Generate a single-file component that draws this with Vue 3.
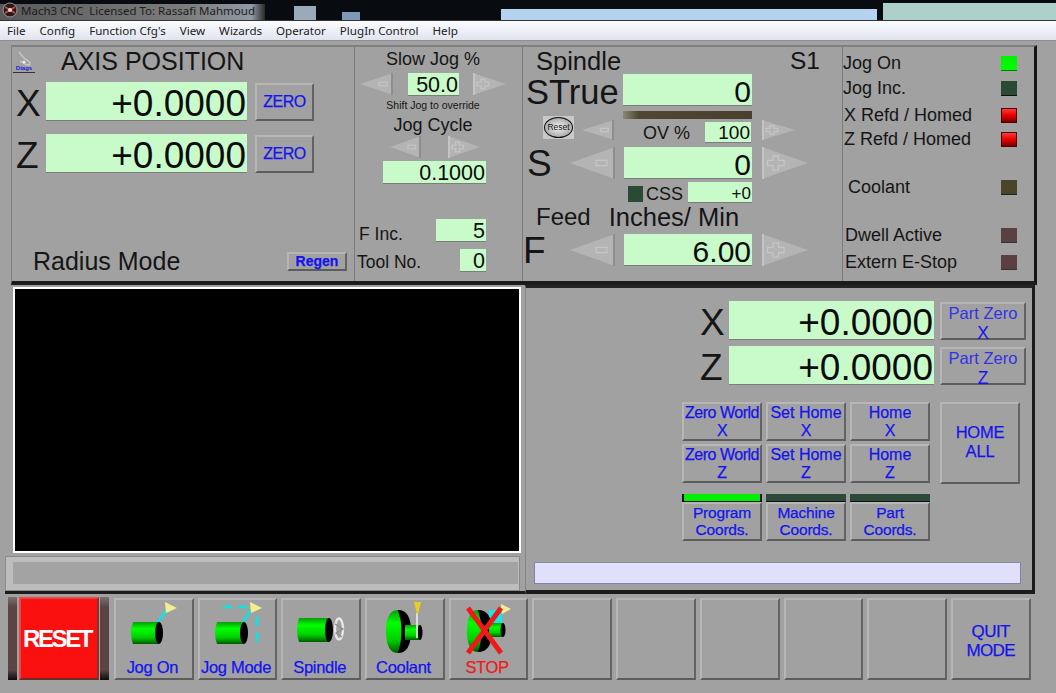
<template>
  <div class="screen">
    <div class="titlebar">
      <svg class="app-icon" width="16" height="16" viewBox="0 0 16 16">
        <circle cx="8" cy="8" r="7" fill="#2a1a1a" stroke="#999" stroke-width="1" />
        <path d="M3 5 L13 11 M3 11 L13 5" stroke="#c44" stroke-width="2" />
        <circle cx="8" cy="8" r="2" fill="#ddd" />
      </svg>
      <span>Mach3 CNC&nbsp; Licensed To: Rassafi Mahmoud</span>
    </div>
    <div class="menubar">
      <span v-for="m in menus" :key="m">{{ m }}</span>
    </div>

    <div class="top">
      <section class="axis">
        <div class="axis-head">
          <svg class="diag" width="22" height="23" viewBox="0 0 22 23">
            <path d="M6 2 C9 6 11 9 14 10 C17 12 18 14 16 15 C12 15 10 13 7 11" fill="none" stroke="#c9c9c9" stroke-width="1.4" />
            <circle cx="11" cy="12" r="1.5" fill="#eee" />
            <text x="11" y="20" text-anchor="middle" font-size="6" font-weight="bold" fill="#1a1ae0">Diags</text>
            <path d="M0 22.5 H22" stroke="#333" />
          </svg>
          <h1>AXIS POSITION</h1>
        </div>
        <div class="axis-row">
          <span class="big-label">X</span>
          <div class="dro dro-big axis-dro">+0.0000</div>
          <button class="btn zero">ZERO</button>
        </div>
        <div class="axis-row second">
          <span class="big-label">Z</span>
          <div class="dro dro-big axis-dro">+0.0000</div>
          <button class="btn zero">ZERO</button>
        </div>
        <div class="axis-foot">
          <span class="radius">Radius Mode</span>
          <button class="btn regen">Regen</button>
        </div>
      </section>

      <section class="jog">
        <div class="jog-title first">Slow Jog %</div>
        <div class="jog-row">
          <Arrow dir="left" :w="33" :h="22" />
          <div class="dro dro-mid slow-dro">50.0</div>
          <Arrow dir="right" :w="33" :h="22" />
        </div>
        <div class="shift">Shift Jog to override</div>
        <div class="jog-title">Jog Cycle</div>
        <div class="jog-row cycle-arrows">
          <Arrow dir="left" :w="31" :h="22" />
          <Arrow dir="right" :w="32" :h="22" />
        </div>
        <div class="dro dro-mid cycle-dro">0.1000</div>
        <div class="small-row finc">
          <span>F Inc.</span>
          <div class="dro dro-mid finc-dro">5</div>
        </div>
        <div class="small-row tool">
          <span>Tool No.</span>
          <div class="dro dro-mid tool-dro">0</div>
        </div>
      </section>

      <section class="spindle">
        <div class="spin-head">
          <span>Spindle</span>
          <span class="s1">S1</span>
        </div>
        <div class="spin-true">
          <span class="strue">STrue</span>
          <div class="dro dro-spin">0</div>
        </div>
        <div class="ov-bar"></div>
        <div class="ov-row">
          <div class="reset-round"><span>Reset</span></div>
          <Arrow dir="left" :w="32" :h="20" />
          <span class="ov-label">OV %</span>
          <div class="dro ov-dro">100</div>
          <Arrow dir="right" :w="33" :h="20" />
        </div>
        <div class="spin-row s-row">
          <span class="big-label spin-label">S</span>
          <Arrow dir="left" :w="45" :h="32" />
          <div class="dro dro-spin">0</div>
          <Arrow dir="right" :w="46" :h="32" />
        </div>
        <div class="css-row">
          <i class="led css-led"></i>
          <span class="css-label">CSS</span>
          <div class="dro css-dro">+0</div>
        </div>
        <div class="feed-head">
          <span>Feed</span>
          <span class="units">Inches/ Min</span>
        </div>
        <div class="spin-row">
          <span class="big-label spin-label f-label">F</span>
          <Arrow dir="left" :w="45" :h="32" />
          <div class="dro dro-spin">6.00</div>
          <Arrow dir="right" :w="46" :h="32" />
        </div>
      </section>

      <section class="leds">
        <div v-for="l in leds" :key="l.label" class="led-row" :style="{ marginTop: l.top + 'px' }">
          <span :style="{ paddingLeft: l.pad + 'px' }">{{ l.label }}</span>
          <i class="led" :class="l.color"></i>
        </div>
      </section>
    </div>

    <div class="middle">
      <div class="left-col">
        <div class="toolpath"></div>
        <div class="status"><div class="status-inner"></div></div>
      </div>
      <div class="right-panel">
        <div class="pos-row">
          <span class="big-label pos-label">X</span>
          <div class="dro dro-big pos-dro">+0.0000</div>
          <button class="btn part">Part Zero<b>X</b></button>
        </div>
        <div class="pos-row pos-second">
          <span class="big-label pos-label">Z</span>
          <div class="dro dro-big pos-dro">+0.0000</div>
          <button class="btn part">Part Zero<b>Z</b></button>
        </div>
        <div class="home-block">
          <div class="home-grid">
            <button v-for="b in homeButtons" :key="b" class="btn home-btn" :class="{ tight: b.startsWith('Zero') }">{{ b }}</button>
          </div>
          <button class="btn home-all">HOME<br>ALL</button>
        </div>
        <div class="coords">
          <div v-for="c in coords" :key="c.label" class="coord">
            <div class="coord-led" :class="{ on: c.on }"></div>
            <button class="btn home-btn coord-btn">{{ c.label }}</button>
          </div>
        </div>
        <div class="msg"></div>
      </div>
    </div>

    <div class="bottom">
      <div class="reset-group">
        <i class="reset-side"></i>
        <button class="reset-btn">RESET</button>
        <i class="reset-side narrow"></i>
      </div>
      <button class="btn tool-btn">
        <svg width="76" height="56" viewBox="0 0 76 56">
          <defs>
            <linearGradient id="g1" x1="0" y1="0" x2="0" y2="1">
              <stop offset="0" stop-color="#0a9a0a" /><stop offset="0.3" stop-color="#00ff00" />
              <stop offset="0.7" stop-color="#00d000" /><stop offset="1" stop-color="#005a00" />
            </linearGradient>
          </defs>
          <path d="M44 22 L54 8" stroke="#19dede" stroke-width="3" />
          <path d="M51 2 L63 8 L52 13 Z" fill="#f4ee90" />
          <path d="M19 22 H45 V44 H19 Q15 33 19 22 Z" fill="url(#g1)" />
          <ellipse cx="45" cy="33" rx="4" ry="11" fill="#000" />
        </svg>
        <span>Jog On</span>
      </button>
      <button class="btn tool-btn">
        <svg width="76" height="56" viewBox="0 0 76 56">
          <defs>
            <linearGradient id="g2" x1="0" y1="0" x2="0" y2="1">
              <stop offset="0" stop-color="#0a9a0a" /><stop offset="0.3" stop-color="#00ff00" />
              <stop offset="0.7" stop-color="#00d000" /><stop offset="1" stop-color="#005a00" />
            </linearGradient>
          </defs>
          <path d="M45 22 L53 10" stroke="#19dede" stroke-width="3" />
          <path d="M25 7 H52" stroke="#19dede" stroke-width="3" stroke-dasharray="9 6" />
          <path d="M59 16 V43" stroke="#19dede" stroke-width="3" stroke-dasharray="10 6" />
          <path d="M52 2 L64 8 L53 13 Z" fill="#f4ee90" />
          <path d="M19 22 H46 V44 H19 Q15 33 19 22 Z" fill="url(#g2)" />
          <ellipse cx="46" cy="33" rx="4" ry="11" fill="#000" />
        </svg>
        <span>Jog Mode</span>
      </button>
      <button class="btn tool-btn">
        <svg width="76" height="56" viewBox="0 0 76 56">
          <defs>
            <linearGradient id="g3" x1="0" y1="0" x2="0" y2="1">
              <stop offset="0" stop-color="#0a9a0a" /><stop offset="0.3" stop-color="#00ff00" />
              <stop offset="0.7" stop-color="#00d000" /><stop offset="1" stop-color="#005a00" />
            </linearGradient>
          </defs>
          <path d="M17 18 H47 V42 H17 Q13 30 17 18 Z" fill="url(#g3)" />
          <ellipse cx="47" cy="30" rx="4" ry="12" fill="#000" />
          <ellipse cx="57" cy="29" rx="4" ry="10.5" fill="none" stroke="#e6e6e6" stroke-width="2.4" />
          <path d="M53 24 L61 29 L54 33 L60 37" fill="none" stroke="#8a8a8a" stroke-width="1.2" />
        </svg>
        <span>Spindle</span>
      </button>
      <button class="btn tool-btn">
        <svg width="76" height="56" viewBox="0 0 76 56">
          <defs>
            <linearGradient id="g4" x1="0" y1="0" x2="0" y2="1">
              <stop offset="0" stop-color="#0a9a0a" /><stop offset="0.3" stop-color="#00ff00" />
              <stop offset="0.7" stop-color="#00d000" /><stop offset="1" stop-color="#005a00" />
            </linearGradient>
          </defs>
          <path d="M33 10 Q46 10 46 31 Q46 53 33 53 Z" fill="#000" />
          <path d="M21 31 Q21 10 33 10 Q40 31 33 53 Q21 53 21 31 Z" fill="url(#g4)" />
          <path d="M40 25 H55 V40 H40 Z" fill="url(#g4)" />
          <ellipse cx="55" cy="32.5" rx="2.5" ry="7.5" fill="#000" />
          <path d="M52 13 V38" stroke="#eee" stroke-width="1.6" />
          <path d="M49 2 H56 L53 14 H52 Z" fill="#e8d020" />
        </svg>
        <span>Coolant</span>
      </button>
      <button class="btn tool-btn stop">
        <svg width="76" height="56" viewBox="0 0 76 56">
          <defs>
            <linearGradient id="g5" x1="0" y1="0" x2="0" y2="1">
              <stop offset="0" stop-color="#0a9a0a" /><stop offset="0.3" stop-color="#00ff00" />
              <stop offset="0.7" stop-color="#00d000" /><stop offset="1" stop-color="#005a00" />
            </linearGradient>
          </defs>
          <path d="M40 10 H53 V24 H40 Z" fill="#19e6e6" />
          <path d="M29 10 Q43 10 43 31 Q43 52 29 52 Z" fill="#000" />
          <path d="M18 31 Q18 10 29 10 Q36 31 29 52 Q18 52 18 31 Z" fill="url(#g5)" />
          <path d="M40 23 H54 V37 H40 Z" fill="url(#g5)" />
          <ellipse cx="54" cy="30" rx="2.5" ry="7" fill="#000" />
          <path d="M52 4 L62 9 L53 14 Z" fill="#f4ee90" />
          <path d="M19 8 L52 53 M52 8 L19 53" stroke="#f01818" stroke-width="5" />
        </svg>
        <span>STOP</span>
      </button>
      <button v-for="n in 5" :key="n" class="btn tool-btn"></button>
      <button class="btn tool-btn quit">QUIT<br>MODE</button>
    </div>
  </div>
</template>

<script setup>
import { h } from 'vue'

const menus = ['File', 'Config', "Function Cfg's", 'View', 'Wizards', 'Operator', 'PlugIn Control', 'Help']

const leds = [
  { label: 'Jog On', top: 4, pad: 0, color: 'green' },
  { label: 'Jog Inc.', top: 1, pad: 0, color: 'dark' },
  { label: 'X Refd / Homed', top: 3, pad: 1, color: 'red' },
  { label: 'Z Refd / Homed', top: 0, pad: 1, color: 'red' },
  { label: 'Coolant', top: 24, pad: 5, color: 'olive' },
  { label: 'Dwell Active', top: 24, pad: 2, color: 'brown' },
  { label: 'Extern E-Stop', top: 3, pad: 2, color: 'brown' },
]

const homeButtons = ['Zero World\nX', 'Set Home\nX', 'Home\nX', 'Zero World\nZ', 'Set Home\nZ', 'Home\nZ']

const coords = [
  { label: 'Program\nCoords.', on: true },
  { label: 'Machine\nCoords.', on: false },
  { label: 'Part\nCoords.', on: false },
]

// the little triangular +/- jog buttons
const Arrow = (p) => {
  const left = p.dir === 'left'
  const mark = { fill: 'none', stroke: '#c6c6c6', 'stroke-width': 1.2, 'vector-effect': 'non-scaling-stroke' }
  return h('svg', { width: p.w, height: p.h, viewBox: '0 0 100 100', preserveAspectRatio: 'none' }, [
    h('polygon', { points: left ? '0,50 100,0 100,100' : '0,0 100,50 0,100', fill: '#b4b4b4' }),
    h('path', { d: left ? 'M100 0 V100' : 'M0 0 V100', stroke: left ? '#8e8e8e' : '#c4c4c4', 'stroke-width': 4, 'vector-effect': 'non-scaling-stroke' }),
    left
      ? h('rect', { x: 58, y: 42, width: 24, height: 16, ...mark })
      : h('path', { d: 'M12 42 H24 V28 H36 V42 H48 V58 H36 V72 H24 V58 H12 Z', ...mark }),
  ])
}
Arrow.props = ['dir', 'w', 'h']
</script>

<style>
html, body {
  margin: 0;
  background: #a1a1a1;
}
</style>

<style scoped>
.screen {
  width: 1056px;
  height: 693px;
  overflow: hidden;
  background: #a1a1a1;
  color: #151515;
  font-family: "Liberation Sans", Arial, sans-serif;
}
button {
  font-family: inherit;
  padding: 0;
}
h1 {
  margin: 0;
  font-weight: normal;
  font-size: 25px;
}

/* window chrome */
.titlebar {
  height: 20px;
  box-sizing: border-box;
  display: flex;
  align-items: center;
  gap: 3px;
  font-family: "Noto Sans", sans-serif;
  font-size: 11.5px;
  color: #1c1c1c;
  background-color: #080c10;
  background-image:
    linear-gradient(#aed0ca, #aed0ca),
    linear-gradient(#b5d3ee, #b5d3ee),
    linear-gradient(#7f99b8, #7f99b8),
    linear-gradient(#9aaabb, #9aaabb),
    linear-gradient(to right, #5a5a5a, #7c7c7c 70%, #8f9aa5 95%, #2a2a2a);
  background-size: 173px 17px, 376px 11px, 18px 8px, 22px 14px, 265px 16px;
  background-position: 883px 3px, 501px 9px, 342px 12px, 294px 6px, 0 4px;
  background-repeat: no-repeat;
}
.app-icon {
  margin-left: 2px;
  flex: none;
}
.menubar {
  height: 21px;
  box-sizing: border-box;
  display: flex;
  align-items: center;
  gap: 14px;
  padding-left: 7px;
  font-family: "Noto Sans", sans-serif;
  font-size: 11.6px;
  color: #222;
  background: linear-gradient(#fbfcfe, #dfe4ef);
  border-top: 1px solid #333;
  border-bottom: 1px solid #8f8f8f;
}

/* top panel */
.top {
  display: flex;
  height: 240px;
  box-sizing: border-box;
  margin: 4px 19px 0 11px;
  border-top: 2px solid #7f7f7f;
  border-left: 1px solid #7f7f7f;
  border-right: 3px solid #151515;
  border-bottom: 4px solid #1c1c1c;
}
.axis, .jog, .spindle {
  box-sizing: border-box;
  border-right: 1px solid #7b7b7b;
  display: flex;
  flex-direction: column;
}
.axis { width: 343px; }
.jog { width: 168px; }
.spindle { width: 320px; }

.axis-head {
  height: 35px;
  display: flex;
  align-items: flex-start;
}
.axis-head h1 {
  margin: 0 0 0 26px;
  line-height: 28px;
}
.diag {
  margin: 3px 0 0 1px;
  flex: none;
}
.axis-row {
  display: flex;
  align-items: center;
  height: 39px;
  padding-left: 4px;
}
.axis-row.second { margin-top: 13px; }
.big-label {
  font-size: 37px;
  line-height: 1;
  padding-top: 3px;
}
.axis-row .big-label { width: 30px; }
.axis-foot {
  margin-top: auto;
  height: 29px;
  display: flex;
  align-items: flex-start;
  padding-left: 21px;
}
.radius {
  font-size: 25px;
  line-height: 18px;
  width: 254px;
}
.regen {
  width: 60px;
  height: 19px;
  font-size: 14px;
  font-weight: bold;
  line-height: 14px;
  padding-bottom: 2px;
}

.dro {
  flex: none;
  box-sizing: border-box;
  background: #c9fbca;
  color: #0c0c0c;
  text-align: right;
  border-bottom: 1px solid #7c7c7c;
  padding-right: 1px;
}
.dro-big {
  font-size: 37px;
  height: 39px;
  line-height: 43px;
}
.axis-dro { width: 201px; margin-right: 8px; }
.dro-mid {
  font-size: 21.5px;
  height: 23px;
  line-height: 24px;
}
.btn {
  flex: none;
  box-sizing: border-box;
  background: #a1a1a1;
  color: #1414ee;
  border: 2px solid;
  border-color: #b6b6b6 #636363 #5c5c5c #b6b6b6;
  -webkit-text-stroke: 0.25px currentColor;
}
.zero {
  width: 59px;
  height: 38px;
  font-size: 16px;
  letter-spacing: -0.5px;
}

/* jog column */
.jog-title {
  width: 156px;
  text-align: center;
  font-size: 18px;
  height: 22px;
  line-height: 22px;
}
.jog-title.first {
  height: 25px;
  line-height: 25px;
}
.jog-row {
  width: 156px;
  display: flex;
  align-items: center;
  justify-content: center;
  gap: 14px;
  height: 24px;
}
.slow-dro { width: 51px; margin-left: 1px; }
.shift {
  width: 156px;
  height: 18px;
  line-height: 18px;
  text-align: center;
  font-size: 10.5px;
}
.cycle-arrows {
  height: 22px;
  gap: 27px;
  padding-left: 4px;
  box-sizing: border-box;
}
.cycle-dro {
  width: 103px;
  margin: 3px 0 0 28px;
}
.small-row {
  width: 131px;
  height: 23px;
  box-sizing: border-box;
  padding-left: 4px;
  display: flex;
  justify-content: space-between;
  align-items: center;
  font-size: 17.5px;
}
.small-row span { line-height: 17px; }
.finc { margin-top: 35px; }
.tool { margin-top: 7px; padding-left: 2px; }
.finc span { padding-top: 7px; }
.tool span { padding-top: 3px; }
.finc-dro { width: 50px; }
.tool-dro { width: 26px; }

/* spindle column */
.spin-head {
  height: 27px;
  display: flex;
  justify-content: space-between;
  padding: 0 22px 0 13px;
  font-size: 25.5px;
  line-height: 28px;
}
.s1 { font-size: 24.5px; }
.spin-true {
  height: 32px;
  display: flex;
  align-items: center;
  padding-left: 3px;
}
.strue {
  width: 97px;
  font-size: 34.5px;
  line-height: 1;
  padding-top: 5px;
}
.dro-spin {
  width: 129px;
  height: 32px;
  line-height: 35px;
  font-size: 30px;
}
.ov-bar {
  width: 129px;
  height: 8px;
  margin: 5px 0 -3px 100px;
  background: linear-gradient(to right, #8a8a70, #4f4732 12%, #4a3f2e);
}
.ov-row {
  height: 27px;
  display: flex;
  align-items: flex-start;
  padding-left: 20px;
}
.reset-round {
  width: 31px;
  height: 23px;
  background: #c9c9c9;
  display: flex;
  align-items: center;
  justify-content: center;
  margin-right: 8px;
}
.reset-round span {
  width: 29px;
  height: 21px;
  box-sizing: border-box;
  border: 1px solid #111;
  border-radius: 50%;
  background: radial-gradient(#f4f4f4, #8f8f8f);
  font-size: 8.5px;
  line-height: 19px;
  text-align: center;
  color: #111;
}
.ov-row svg {
  margin-top: 4px;
}
.ov-label {
  width: 62px;
  padding-left: 29px;
  font-size: 18px;
  line-height: 20px;
  margin-top: 7px;
}
.ov-dro {
  width: 46px;
  height: 21px;
  line-height: 22px;
  font-size: 19px;
  margin: 6px 11px 0 0;
}
.spin-row {
  height: 32px;
  display: flex;
  align-items: center;
  gap: 9px;
}
.s-row { margin-top: 4px; }
.spin-row .dro-spin { width: 128px; }
.spin-row svg:last-child { margin-left: 1px; }
.spin-label {
  width: 47px;
  box-sizing: border-box;
  margin-right: -9px;
  padding-left: 4px;
  padding-top: 0;
}
.f-label { padding-left: 0; }
.css-row {
  height: 21px;
  margin-top: 3px;
  display: flex;
  align-items: center;
  padding-left: 105px;
}
.css-led {
  width: 15px;
  height: 16px;
  background: #2a4a35;
  margin-top: 2px;
}
.css-label {
  width: 42px;
  padding: 4px 0 0 3px;
  font-size: 18px;
}
.css-dro {
  width: 64px;
  height: 21px;
  line-height: 23px;
  font-size: 17px;
}
.feed-head {
  height: 31px;
  display: flex;
  gap: 18px;
  padding-left: 13px;
  font-size: 24px;
  line-height: 28px;
}
.units {
  font-size: 25.5px;
}

/* leds */
.leds {
  flex: 1;
  display: flex;
  flex-direction: column;
}
.led-row {
  height: 24px;
  display: flex;
  align-items: center;
  font-size: 18px;
}
.led-row span {
  width: 158px;
  flex: none;
  box-sizing: border-box;
}
.led {
  display: block;
  flex: none;
  box-sizing: border-box;
}
.led-row .led {
  width: 16px;
  height: 15px;
}
.green { background: linear-gradient(#00f000, #00ff00); border-bottom: 1px solid #0a7a0a; }
.dark { background: #2a4a35; border-bottom: 1px solid #111; }
.red { background: linear-gradient(#ff3a3a, #e50000 50%, #7a0000); border: 1px solid #4a0000; }
.olive { background: #4a4428; border-bottom: 1px solid #222; }
.brown { background: #5a4040; border-bottom: 1px solid #333; }

/* middle */
.middle {
  display: flex;
  height: 309px;
  margin-left: 5px;
}
.left-col {
  width: 520px;
  flex: none;
  box-sizing: border-box;
  border-bottom: 3px solid #1c1c1c;
}
.toolpath {
  width: 508px;
  height: 266px;
  margin: 2px 0 0 8px;
  box-sizing: border-box;
  background: #000;
  border: 2px solid #fff;
}
.status {
  width: 515px;
  height: 35px;
  margin-top: 3px;
  box-sizing: border-box;
  padding: 5px 1px 6px 7px;
  background: #bdbdbd;
  border: 1px solid #8a8a8a;
}
.status-inner {
  height: 100%;
  background: #a3a3a3;
}
.right-panel {
  width: 510px;
  box-sizing: border-box;
  border-top: 3px solid #242424;
  border-right: 3px solid #1b1b1b;
  border-bottom: 4px solid #1b1b1b;
  border-left: 1px solid #858585;
  padding-top: 13px;
}
.pos-row {
  height: 39px;
  display: flex;
  align-items: center;
  padding-left: 174px;
}
.pos-second { margin-top: 6px; }
.pos-label { width: 29px; }
.pos-dro { width: 205px; margin-right: 6px; }
.part {
  width: 86px;
  height: 38px;
  font-size: 16.5px;
  line-height: 19px;
  color: #3232e6;
  padding-bottom: 3px;
  -webkit-text-stroke: 0;
}
.part b {
  display: block;
  font-weight: normal;
  font-size: 17.5px;
  line-height: 20px;
  color: #1414ee;
}
.home-block {
  margin-top: 17px;
  padding-left: 156px;
  display: flex;
  gap: 10px;
}
.home-grid {
  width: 248px;
  display: grid;
  grid-template-columns: repeat(3, 80px);
  grid-auto-rows: 39px;
  gap: 3px 4px;
}
.home-btn {
  width: 80px;
  height: 39px;
  font-size: 16px;
  line-height: 18px;
  white-space: pre-line;
  padding-bottom: 2px;
}
.tight {
  letter-spacing: -0.5px;
}
.home-all {
  width: 80px;
  height: 82px;
  font-size: 16.5px;
  line-height: 19px;
  letter-spacing: -0.2px;
  padding-bottom: 2px;
}
.coords {
  margin-top: 10px;
  padding-left: 156px;
  display: flex;
  gap: 4px;
}
.coord-led {
  height: 8px;
  background: #2d4a38;
  border-bottom: 1px solid #111;
  box-sizing: border-box;
}
.coord-led.on {
  background: #00f000;
  border: 2px solid #111;
  border-width: 0 2px 1px 2px;
}
.coord .coord-btn {
  display: block;
  line-height: 17px;
  font-size: 15.5px;
  letter-spacing: -0.2px;
}
.msg {
  width: 487px;
  height: 22px;
  margin: 21px 0 0 8px;
  box-sizing: border-box;
  background: #e0e0fb;
  border: 1px solid #7f7fb0;
  border-top-color: #8c8c9a;
}

/* bottom */
.bottom {
  display: flex;
  margin: 4px 0 0 8px;
  gap: 4px;
}
.reset-group {
  display: flex;
  width: 102px;
  height: 83px;
  margin-top: -1px;
}
.reset-side {
  display: block;
  width: 9px;
  margin-right: 2px;
  background: linear-gradient(#7a7272, #5a4444 12%, #5a4444 88%, #0c0c0c);
}
.reset-side.narrow { width: 9px; margin: 0 0 0 1px; }
.reset-btn {
  width: 80px;
  height: 83px;
  box-sizing: border-box;
  background: #fb1010;
  color: #fff;
  font-size: 24px;
  font-weight: bold;
  letter-spacing: -2.4px;
  border: 2px solid;
  border-color: #e84848 #8a3030 #6f2a2a #e84848;
  padding-right: 4px;
}
.tool-btn {
  width: 79.7px;
  height: 82px;
  display: flex;
  flex-direction: column;
  align-items: center;
  font-size: 16.5px;
  letter-spacing: -0.3px;
  padding-right: 3px;
  overflow: hidden;
}
.tool-btn svg {
  flex: none;
  margin-bottom: 2px;
}
.stop { color: #f01818; }
.quit {
  display: block;
  font-size: 17px;
  line-height: 19px;
  letter-spacing: -0.6px;
  padding: 3px 0 0 0;
}
</style>
